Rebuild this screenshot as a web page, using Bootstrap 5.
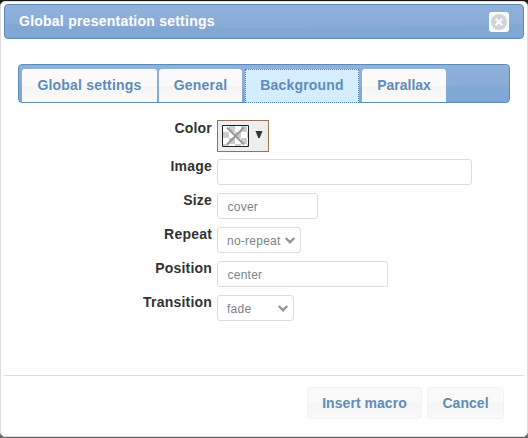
<!DOCTYPE html>
<html lang="en">
<head>
<meta charset="utf-8">
<meta name="viewport" content="width=device-width, initial-scale=1">
<title>Global presentation settings</title>
<link href="https://cdn.jsdelivr.net/npm/bootstrap@5.3.0/dist/css/bootstrap.min.css" rel="stylesheet">
<style>
html, body { height: 438px; overflow: hidden; }
body { background: linear-gradient(#1b1a20 50%, #666 50%); font: bold 14px/17px "Liberation Sans", Arial, sans-serif; letter-spacing: .2px; color: #333; padding: 1px 0; }
.dialog-box { height: 436px; border: 1px solid #ddd; border-radius: 5px; padding: 2px 3px; background: #fff; }
.blue-bar { border: 1px solid #5c8bb8; border-radius: 4px; background: linear-gradient(transparent, rgba(110,152,205,.35)), radial-gradient(ellipse 1500px 250px at 50% -227px, #90b1da 99.8%, #88add8 100%); }
.title-bar { height: 35px; padding: 0 14px; color: #fff; letter-spacing: .24px; }
.close-btn { width: 20px; height: 20px; padding: 0; border: 0; border-radius: 3px; background: #fafafa; line-height: 0; }
.settings-tabs { height: 39px; margin: 25px 14px 0; padding: 4px 3px 0; }
.settings-tabs .nav-link { height: 33px; padding: 8px 0 0; text-align: center; color: #5f8cb8; border: 0; border-radius: 3px 3px 0 0; background: linear-gradient(#fafafa 50%, #f5f5f5 53%, #fafafa); }
.settings-tabs .nav-link.active { height: 34px; padding-top: 7px; border: 1px dotted #4f83b2; border-radius: 0; background: #d4eeff; color: #5f8cb8; }
.t-global { width: 135px; } .t-general { width: 83px; margin-left: 2px; } .t-back { width: 114px; margin-left: 3px; } .settings-tabs .t-parallax { width: 84px; margin-left: 3px; letter-spacing: 0; }
.settings-form { padding: 17px 0 0 14px; height: 272px; }
.form-line { height: 34px; }
.line-color { height: 39px; }
.form-line label { width: 194px; text-align: right; margin-top: -1px; }
.line-color label { margin-top: 0; }
.form-line .form-control, .form-line .form-select { height: 26px; min-height: 0; margin-left: 5px; padding: 2px 9px 0 9.5px; border: 1px solid #ddd; border-radius: 3px; font: 12px/20px "Liberation Sans", Arial, sans-serif; letter-spacing: .25px; color: #7b838a; background-color: #fff; }
.form-line .form-select { background-image: none; padding-right: 0; padding-left: 9px; }
.w-image { width: 255px; } .w-size { width: 101px; } .w-repeat { width: 84px; } .w-position { width: 171px; } .w-transition { width: 77px; }
.select-wrap { position: relative; }
.select-wrap svg { position: absolute; right: 5px; top: 9px; pointer-events: none; }
.color-btn { width: 52px; height: 32px; margin-left: 5px; border: 1px solid #967458; border-radius: 0; background: #eee; padding: 0 5px 0 4px; }
.dialog-footer { height: 57px; border-top: 1px solid #ddd; padding: 11px 20px 0; gap: 5px; }
.dialog-footer .btn { height: 32px; padding: 0; border: 1px solid #f2f2f2; border-radius: 4px; color: #5f8cb8; font: inherit; letter-spacing: .05px; background: linear-gradient(#fafafa 49%, #f5f5f5 51%, #fafafa); }
.b-insert { width: 115px; } .b-cancel { width: 77px; }
</style>
</head>
<body>
<main class="dialog-box">
  <header class="blue-bar title-bar d-flex align-items-center justify-content-between">
    <span>Global presentation settings</span>
    <button class="close-btn" type="button" aria-label="Close"><svg width="20" height="20" viewBox="0 0 20 20"><circle cx="10" cy="10" r="8" fill="#cfd4d9"/><path d="M6.7 6.7l6.6 6.6M13.3 6.7l-6.6 6.6" stroke="#fafafa" stroke-width="2.2"/></svg></button>
  </header>
  <nav class="nav flex-nowrap blue-bar settings-tabs">
    <a class="nav-link t-global">Global settings</a>
    <a class="nav-link t-general">General</a>
    <a class="nav-link t-back active">Background</a>
    <a class="nav-link t-parallax">Parallax</a>
  </nav>
  <form class="settings-form">
    <div class="form-line line-color d-flex align-items-start"><label>Color</label>
      <button type="button" aria-label="Pick color" class="color-btn d-flex align-items-center justify-content-between">
        <svg width="27" height="22" viewBox="0 0 27 22"><defs><pattern id="checks" width="12" height="12" x="1" y="1" patternUnits="userSpaceOnUse"><path fill="#fff" d="M0 0h12v12H0z"/><path fill="#ccc" d="M6 0h6v6H6zM0 6h6v6H0z"/></pattern></defs><path fill="url(#checks)" stroke="#222" d="M.5.5h26v21H.5z"/><path d="M5 2.5l17 17M22 2.5l-17 17" stroke="#999" stroke-width="2"/></svg>
        <svg class="mb-1" width="8" height="7" viewBox="0 0 8 7"><path d="M.5 0h7L4.7 7H3.3z" fill="#333"/></svg>
      </button></div>
    <div class="form-line d-flex align-items-start"><label for="image">Image</label><input id="image" class="form-control w-image"></div>
    <div class="form-line d-flex align-items-start"><label for="size">Size</label><input id="size" class="form-control w-size" value="cover"></div>
    <div class="form-line d-flex align-items-start"><label for="repeat">Repeat</label><div class="select-wrap"><select id="repeat" class="form-select w-repeat"><option>no-repeat</option></select><svg width="12" height="9" viewBox="0 0 12 9"><path d="M1.7 2L6 6.2 10.3 2" fill="none" stroke="#92979c" stroke-width="2.4"/></svg></div></div>
    <div class="form-line d-flex align-items-start"><label for="position">Position</label><input id="position" class="form-control w-position" value="center"></div>
    <div class="form-line d-flex align-items-start"><label for="transition">Transition</label><div class="select-wrap"><select id="transition" class="form-select w-transition"><option>fade</option></select><svg width="12" height="9" viewBox="0 0 12 9"><path d="M1.7 2L6 6.2 10.3 2" fill="none" stroke="#92979c" stroke-width="2.4"/></svg></div></div>
  </form>
  <footer class="dialog-footer d-flex justify-content-end">
    <button class="btn b-insert" type="button">Insert macro</button>
    <button class="btn b-cancel" type="button">Cancel</button>
  </footer>
</main>
<script src="https://cdn.jsdelivr.net/npm/bootstrap@5.3.0/dist/js/bootstrap.bundle.min.js"></script>
</body>
</html>
